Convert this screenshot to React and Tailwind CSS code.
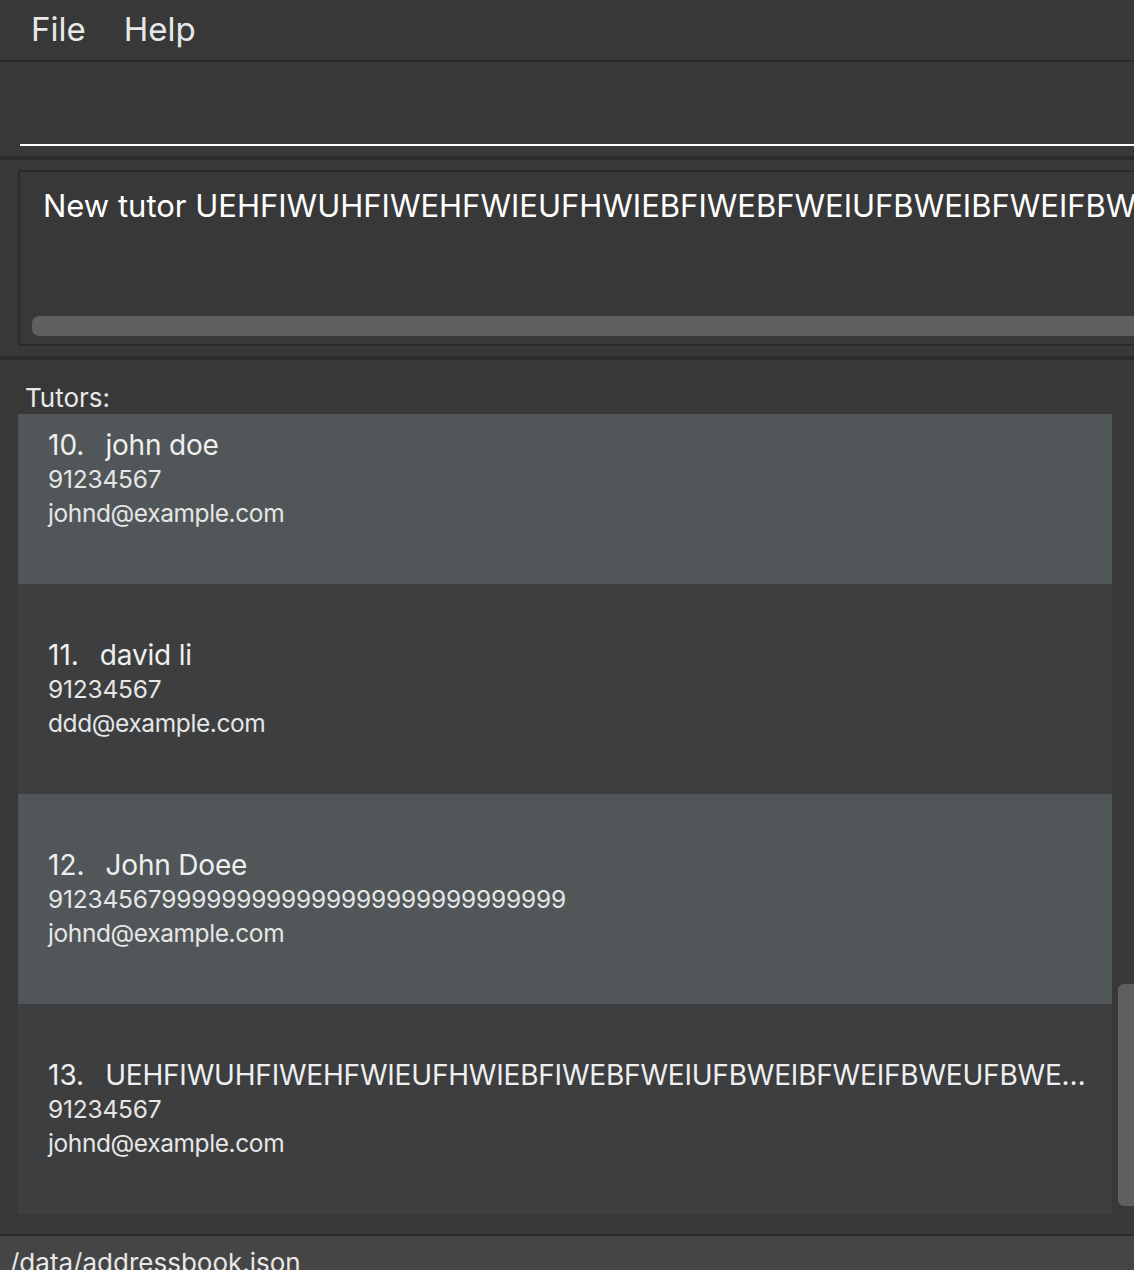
import React from 'react';

const longName = 'UEHFIWUHFIWEHFWIEUFHWIEBFIWEBFWEIUFBWEIBFWEIFBWEUFBWEUFBWIEUFBWIEF';

const tutors = [
  { id: 10, name: 'john doe', phone: '91234567', email: 'johnd@example.com' },
  { id: 11, name: 'david li', phone: '91234567', email: 'ddd@example.com' },
  { id: 12, name: 'John Doee', phone: '91234567999999999999999999999999999', email: 'johnd@example.com' },
  { id: 13, name: longName, phone: '91234567', email: 'johnd@example.com' },
];

const TutorCard = ({ tutor, index }) => (
  <div
    className={`h-[210px] flex flex-col justify-center pl-[30px] pr-[16px] ${
      index % 2 === 0 ? 'bg-[#515658]' : 'bg-[#3c3e3f]'
    }`}
  >
    <div className="flex text-[28px] leading-[34px] text-[#efefef] whitespace-nowrap min-w-0">
      <span className="shrink-0 pr-[21px]">{tutor.id}.</span>
      <span className="truncate tracking-[-0.2px]">{tutor.name}</span>
    </div>
    <div className="text-[24.5px] leading-[34px] tracking-[-0.2px] text-[#e6e6e6]">{tutor.phone}</div>
    <div className="text-[24.5px] leading-[34px] tracking-[-0.4px] text-[#e6e6e6]">{tutor.email}</div>
  </div>
);

export default function App() {
  return (
    <div className="h-[1270px] w-[1134px] overflow-hidden flex flex-col bg-[#383838] font-['Inter',sans-serif]">
      {/* menu bar */}
      <div className="h-[62px] shrink-0 flex items-center gap-[38px] pl-[31px] text-[33px] text-[#e8e8e8] border-b-2 border-[#2b2b2b]">
        <span>File</span>
        <span>Help</span>
      </div>

      {/* command box */}
      <div className="h-[94px] shrink-0 flex flex-col justify-end pl-[20px] pb-[10px]">
        <div className="h-[2px] bg-white" />
      </div>
      <div className="h-[4px] shrink-0 bg-[#2b2b2b]" />

      {/* result display */}
      <div className="h-[196px] shrink-0 pt-[10px] pl-[18px] pb-[10px]">
        <div className="h-[176px] border-2 border-r-0 border-[#2b2b2b] flex flex-col overflow-hidden">
          <div className="pl-[23px] pt-[12px] text-[31px] leading-[44px] text-white whitespace-nowrap">
            New tutor {longName} added
          </div>
          <div className="flex-1" />
          <div className="ml-[12px] mb-[8px] h-[20px] rounded-l-[7px] bg-[#5f5f5f]" />
        </div>
      </div>
      <div className="h-[4px] shrink-0 bg-[#2b2b2b]" />

      {/* tutor list */}
      <div className="flex-1 flex flex-col min-h-0">
        <div className="h-[54px] shrink-0 pl-[25px] pt-[20px] text-[26px] leading-[36px] text-[#e8e8e8]">
          Tutors:
        </div>
        <div className="flex-1 flex min-h-0 pl-[18px] pb-[20px]">
          <div className="w-[1094px] overflow-hidden">
            <div className="-mt-[40px]">
              {tutors.map((t, i) => (
                <TutorCard key={t.id} tutor={t} index={i} />
              ))}
            </div>
          </div>
          <div className="flex-1 relative">
            <div className="absolute left-[6px] right-0 top-[570px] h-[222px] rounded-l-[6px] bg-[#5f5f5f]" />
          </div>
        </div>
      </div>

      {/* status bar */}
      <div className="h-[36px] shrink-0 border-t-2 border-[#2b2b2b] bg-[#454545] pl-[10px] pt-[10px] text-[26px] leading-[34px] text-[#e8e8e8] whitespace-nowrap">
        /data/addressbook.json
      </div>
    </div>
  );
}
